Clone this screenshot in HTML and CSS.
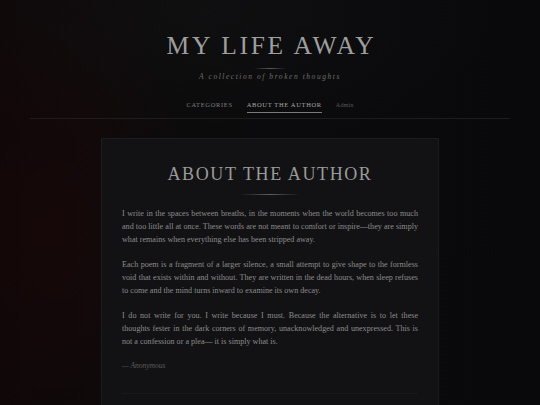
FILE: index.html
```html
<!DOCTYPE html>
<html>
<head>
<meta charset="utf-8">
<link rel="stylesheet" href="styles.css">
</head>
<body>
<div class="page">
  <header class="site-header">
    <h1 class="site-title">MY LIFE AWAY</h1>
    <div class="title-rule"></div>
    <p class="tagline">A collection of broken thoughts</p>
    <nav class="nav">
      <a class="nav-link">CATEGORIES</a>
      <a class="nav-link active">ABOUT THE AUTHOR</a>
      <a class="nav-link admin">Admin</a>
    </nav>
  </header>
  <main class="card">
    <h2 class="card-title">ABOUT THE AUTHOR</h2>
    <div class="card-rule"></div>
    <p class="para">I write in the spaces between breaths, in the moments when the world becomes too much and too little all at once. These words are not meant to comfort or inspire—they are simply what remains when everything else has been stripped away.</p>
    <p class="para">Each poem is a fragment of a larger silence, a small attempt to give shape to the formless void that exists within and without. They are written in the dead hours, when sleep refuses to come and the mind turns inward to examine its own decay.</p>
    <p class="para">I do not write for you. I write because I must. Because the alternative is to let these thoughts fester in the dark corners of memory, unacknowledged and unexpressed. This is not a confession or a plea— it is simply what is.</p>
    <p class="signature">— Anonymous</p>
    <div class="card-foot"></div>
  </main>
</div>
</body>
</html>
```
FILE: styles.css
```css
html, body {
  margin: 0;
  padding: 0;
  height: 100%;
}
body {
  background: #0a0a0c;
  font-family: "Liberation Serif", "DejaVu Serif", serif;
  color: #8e8e8e;
  overflow: hidden;
}
.page {
  min-height: 405px;
  background:
    radial-gradient(ellipse 140px 220px at 60px 230px, rgba(40, 8, 8, 0.35), rgba(40, 8, 8, 0) 100%),
    radial-gradient(ellipse 300px 140px at 200px 10px, rgba(30, 30, 32, 0.25), rgba(0,0,0,0) 100%),
    linear-gradient(90deg, #0e0708 0%, #0b0a0b 30%, #0a0a0c 70%, #09090b 100%);
  padding-top: 33px;
  box-sizing: border-box;
}
.site-header {
  display: flex;
  flex-direction: column;
  align-items: center;
  margin: 0 30px;
  border-bottom: 1px solid #1d1d1f;
}
.site-title {
  margin: 0;
  font-weight: normal;
  font-size: 25.5px;
  line-height: 26px;
  letter-spacing: 2.7px;
  color: #9e9e9e;
  padding-left: 3px;
}
.title-rule {
  width: 32px;
  height: 1px;
  margin-top: 9px;
  background: linear-gradient(90deg, rgba(120,120,120,0), #5a5a5a 50%, rgba(120,120,120,0));
}
.tagline {
  margin: 3px 0 0;
  font-style: italic;
  font-size: 7.5px;
  letter-spacing: 1.55px;
  color: #6e6e6e;
}
.nav {
  display: flex;
  align-items: baseline;
  gap: 14px;
  margin-top: 20px;
  padding-bottom: 5px;
}
.nav-link {
  font-size: 6.5px;
  letter-spacing: 0.65px;
  color: #7f7f7f;
  padding-bottom: 4px;
  border-bottom: 1px solid transparent;
}
.nav-link.active {
  color: #a8a8a8;
  border-bottom-color: #7a7a7a;
}
.nav-link.admin {
  font-size: 6px;
  letter-spacing: 0.2px;
  color: #5a5a5a;
}
.card {
  display: block;
  width: 338px;
  box-sizing: border-box;
  margin: 19px auto 0;
  background: #121214;
  border: 1px solid #1c1c1e;
  padding: 25px 20px 30px;
}
.card-title {
  margin: 0;
  text-align: center;
  font-weight: normal;
  font-size: 18px;
  line-height: 20px;
  letter-spacing: 1.6px;
  color: #9a9a9a;
}
.card-rule {
  width: 60px;
  height: 1px;
  margin: 10px auto 0;
  background: linear-gradient(90deg, rgba(100,100,100,0), #5e5e5e 50%, rgba(100,100,100,0));
}
.para {
  margin: 12px 0 0;
  font-size: 8.1px;
  line-height: 13px;
  text-align: justify;
  color: #8c8c8c;
}
.para + .para {
  margin-top: 12px;
}
.signature {
  margin: 13px 0 0;
  font-style: italic;
  font-size: 7.5px;
  color: #5c5c5c;
}
.card-foot {
  margin-top: 23px;
  height: 1px;
  background: #19191b;
}
```
